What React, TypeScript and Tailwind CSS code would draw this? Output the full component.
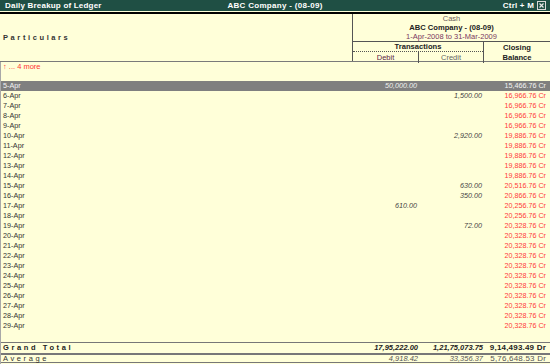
import React from "react";

type Row = { date: string; debit?: string; credit?: string; balance: string };

const rows: Row[] = [
  { date: "5-Apr", debit: "50,000.00", balance: "15,466.76 Cr" },
  { date: "6-Apr", credit: "1,500.00", balance: "16,966.76 Cr" },
  { date: "7-Apr", balance: "16,966.76 Cr" },
  { date: "8-Apr", balance: "16,966.76 Cr" },
  { date: "9-Apr", balance: "16,966.76 Cr" },
  { date: "10-Apr", credit: "2,920.00", balance: "19,886.76 Cr" },
  { date: "11-Apr", balance: "19,886.76 Cr" },
  { date: "12-Apr", balance: "19,886.76 Cr" },
  { date: "13-Apr", balance: "19,886.76 Cr" },
  { date: "14-Apr", balance: "19,886.76 Cr" },
  { date: "15-Apr", credit: "630.00", balance: "20,516.76 Cr" },
  { date: "16-Apr", credit: "350.00", balance: "20,866.76 Cr" },
  { date: "17-Apr", debit: "610.00", balance: "20,256.76 Cr" },
  { date: "18-Apr", balance: "20,256.76 Cr" },
  { date: "19-Apr", credit: "72.00", balance: "20,328.76 Cr" },
  { date: "20-Apr", balance: "20,328.76 Cr" },
  { date: "21-Apr", balance: "20,328.76 Cr" },
  { date: "22-Apr", balance: "20,328.76 Cr" },
  { date: "23-Apr", balance: "20,328.76 Cr" },
  { date: "24-Apr", balance: "20,328.76 Cr" },
  { date: "25-Apr", balance: "20,328.76 Cr" },
  { date: "26-Apr", balance: "20,328.76 Cr" },
  { date: "27-Apr", balance: "20,328.76 Cr" },
  { date: "28-Apr", balance: "20,328.76 Cr" },
  { date: "29-Apr", balance: "20,328.76 Cr" },
];

const cols = "grid grid-cols-[352px_66px_65px_1fr]";

export default function App() {
  return (
    <div
      className="w-[550px] h-[364px] flex flex-col bg-[#ffffd9] overflow-hidden"
      style={{ fontFamily: '"Liberation Sans", Arial, sans-serif' }}
    >
      {/* title bar */}
      <div className="h-[11px] bg-[#1f4f44] flex items-center text-white font-bold text-[8px] leading-none px-[5px]">
        <div className="flex-1 tracking-[0.2px]">Daily Breakup of Ledger</div>
        <div className="tracking-[0.3px]">ABC Company - (08-09)</div>
        <div className="flex-1 flex justify-end items-center gap-[3px]">
          <span className="tracking-[0.2px]">Ctrl + M</span>
          <svg width="9" height="9" viewBox="0 0 9 9" className="mr-[-1px]">
            <rect x="0.5" y="0.5" width="8" height="8" fill="#1f4f44" stroke="#d8d8d8" />
            <path d="M2.5 2.5 L6.5 6.5 M6.5 2.5 L2.5 6.5" stroke="#e8e8e8" strokeWidth="1.2" />
          </svg>
        </div>
      </div>
      <div className="h-[1px]" />
      <div className="h-[2px] bg-black" />

      {/* header */}
      <div className="flex h-[48px] border-b border-[#7a7a7a]">
        <div className="w-[352px] flex items-center pl-[3px] text-[7.5px] font-bold tracking-[2.6px] text-[#333]">
          Particulars
        </div>
        <div className="flex-1 flex flex-col border-l border-[#555]">
          <div className="h-[28px] flex flex-col items-center justify-center leading-[9px] border-b border-[#555]">
            <div className="text-[7.5px] text-[#6d5c5c]">Cash</div>
            <div className="text-[7.6px] font-bold text-[#222]">ABC Company - (08-09)</div>
            <div className="text-[7.5px] text-[#7a3860]">1-Apr-2008 to 31-Mar-2009</div>
          </div>
          <div className="flex-1 flex">
            <div className="w-[131px] flex flex-col border-r border-[#555]">
              <div className="h-[10px] flex items-center justify-center text-[7.6px] font-bold text-[#222] border-b border-dotted border-[#555]">
                Transactions
              </div>
              <div className="flex-1 flex text-[7.5px]">
                <div className="w-[66px] flex items-center justify-center text-[#5e2448] border-r border-[#555]">Debit</div>
                <div className="flex-1 flex items-center justify-center text-[#666]">Credit</div>
              </div>
            </div>
            <div className="flex-1 flex flex-col items-center justify-center text-[7.6px] font-bold text-[#222] leading-[10px]">
              <div>Closing</div>
              <div>Balance</div>
            </div>
          </div>
        </div>
      </div>

      {/* body */}
      <div className="flex-1 flex flex-col border-l border-[#a8a8a8]">
        <div className="h-[10px] flex items-center pl-[2px] text-[7.5px] text-[#ff3333] leading-none">
          ↑ ... 4 more
        </div>
        <div className="h-[9px]" />
        {rows.map((r, i) => {
          const hi = i === 0;
          return (
            <div
              key={r.date}
              className={`${cols} h-[10px] items-center text-[7.2px] leading-none ${hi ? "bg-[#7f7f7f] text-[#f4f4f4]" : "text-[#333]"}`}
            >
              <div className="pl-[2px]">{r.date}</div>
              <div className={`text-right pr-[2px] italic ${hi ? "text-[#f0f0f0]" : "text-[#444]"}`}>{r.debit}</div>
              <div className={`text-right pr-[2px] italic ${hi ? "text-[#f0f0f0]" : "text-[#444]"}`}>{r.credit}</div>
              <div className={`text-right pr-[4px] ${hi ? "text-[#f4f4f4]" : "text-[#ff3a3a]"}`}>{r.balance}</div>
            </div>
          );
        })}
        <div className="flex-1" />
        <div className={`${cols} h-[11px] items-center border-t border-[#777] text-[7.5px] font-bold leading-none text-[#222]`}>
          <div className="pl-[2px] tracking-[2.6px]">Grand Total</div>
          <div className="text-right pr-[1px] italic">17,95,222.00</div>
          <div className="text-right pr-[1px] italic">1,21,75,073.75</div>
          <div className="text-right pr-[4px] tracking-[0.2px] text-[8px]">9,14,493.49 Dr</div>
        </div>
        <div className={`${cols} h-[10px] items-center border-t-2 border-b border-[#777] text-[7.5px] leading-none text-[#555]`}>
          <div className="pl-[2px] tracking-[2.6px] text-[#333]">Average</div>
          <div className="text-right pr-[1px] italic">4,918.42</div>
          <div className="text-right pr-[1px] italic">33,356.37</div>
          <div className="text-right pr-[4px] tracking-[0.2px] text-[8px]">5,76,648.53 Dr</div>
        </div>
        <div className="h-[1px]" />
      </div>
    </div>
  );
}
